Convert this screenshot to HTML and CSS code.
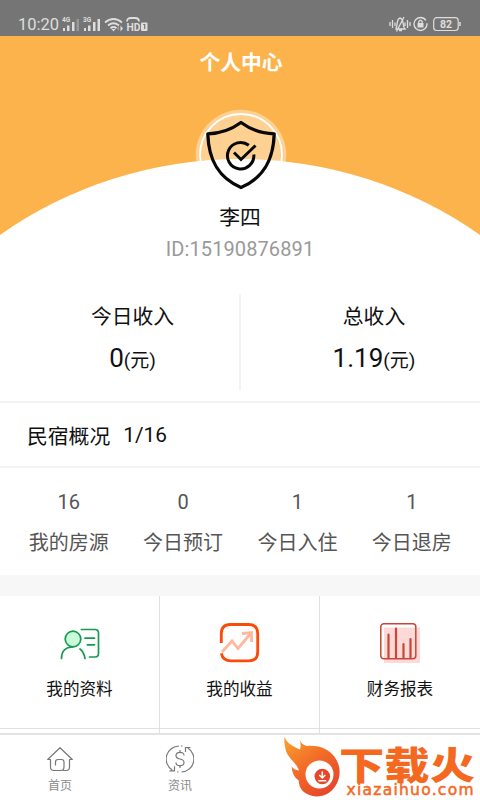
FILE: index.html
```html
<!DOCTYPE html>
<html lang="zh-CN">
<head>
<meta charset="utf-8">
<title>个人中心</title>
<link rel="stylesheet" href="styles.css">
</head>
<body>
<div class="app">
  <header class="status">
    <span class="clock">10:20</span>
    <svg class="signals" width="88" height="18" viewBox="0 0 88 18" fill="#dedede">
      <text x="0" y="6" class="net">4G</text>
      <path d="M1 12h2v3H1zM5 9.500h2.500V15H5zM10 6h2.500v9H10z"/><path d="M14.500 3H17v12h-2.500z" opacity=".35"/>
      <text x="21" y="6" class="net">3G</text>
      <path d="M22 12h2v3h-2zM26 9.500h2.500V15H26zM31 6h2.500v9H31zM35.500 3H38v12h-2.500z"/>
      <g fill="none" stroke="#dedede" stroke-width="1.800"><path d="M43 6.500q8.500-7 17 0M46 9.500q5.500-4.500 11 0M48.500 12.200q3-2.400 6 0"/></g>
      <path d="M49.500 13h4l-2 2.500z"/><path d="M58.500 9.500l2.500 3-2.500 3z"/><path d="M57 10v5l-2-2.500z" opacity=".4"/>
      <path d="M65 5.500Q65 2 69 2h4q4 0 4 3.500" fill="none" stroke="#dedede" stroke-width="1.800"/>
      <text x="64.500" y="15" class="hd" textLength="14" lengthAdjust="spacingAndGlyphs">HD</text>
      <rect x="79" y="6.500" width="6.500" height="8.500" rx="1"/><path d="M81.200 8.500h1.500v4.500" fill="none" stroke="#757575" stroke-width="1.200"/>
    </svg>
    <svg class="indicators" width="74" height="18" viewBox="0 0 74 18" fill="none" stroke="#dedede">
      <path stroke-width="1.300" d="M1 7v4M3.500 5v8M6 7.500v3.500M18.500 5v8M16 7.500v3.500M21 7v4M7 13c2-2 0-9 4-10 4.500 1 2 8 5 11H7zM7.500 16.500L15 2M10 15.500h3"/>
      <circle cx="31.500" cy="9" r="6.500" stroke-width="1.400" stroke-dasharray="36 3"/><rect x="28.500" y="8" width="6" height="4.500" fill="#dedede" stroke="none"/><path d="M29.800 8V6.500q1.700-2.500 3.400 0V8" stroke-width="1.300"/>
      <rect x="44.700" y="2.700" width="24.500" height="12.800" rx="3" stroke-width="1.200"/><path d="M71 7v4" stroke-width="1.500"/>
      <text x="57" y="13.200" class="level">82</text>
    </svg>
  </header>

  <section class="profile">
    <svg class="backdrop" width="480" height="200" viewBox="0 0 480 200"><path fill="#fdb34b" d="M0 0h480v199A417 417 0 0 0 0 199z"/></svg>
    <h1>个人中心</h1>
    <svg class="avatar" width="92" height="92" viewBox="0 0 92 92" fill="none">
      <circle cx="46" cy="46" r="45.300" fill="#fff" opacity=".4"/>
      <circle cx="46" cy="46" r="41" stroke="#fff" stroke-width="1.800"/>
      <path fill="#fff" d="M0 54.500Q46 46 92 54.500V92H0z"/>
      <path d="M46 13.500Q31 24.500 12.800 24.800C13.500 50 22.500 68.500 46 78.500C69.500 68.500 78.500 50 79.200 24.800Q61 24.500 46 13.500z" stroke="#080808" stroke-width="3.300" stroke-linejoin="round"/>
      <path d="M53.800 36.300A13.200 13.200 0 1 0 58.800 45.500M39 43.500l7 7L60.500 36.500" stroke="#080808" stroke-width="3"/>
    </svg>
    <div class="name">李四</div>
    <div class="uid">ID:15190876891</div>
  </section>

  <section class="income">
    <div class="income-item"><div>今日收入</div><div class="amount">0<small>(元)</small></div></div>
    <div class="income-item"><div>总收入</div><div class="amount">1.19<small>(元)</small></div></div>
  </section>

  <section class="overview"><span>民宿概况</span><span>1/16</span></section>

  <section class="stats">
    <div><b>16</b><span>我的房源</span></div>
    <div><b>0</b><span>今日预订</span></div>
    <div><b>1</b><span>今日入住</span></div>
    <div><b>1</b><span>今日退房</span></div>
  </section>

  <section class="menu">
    <div class="tile">
      <svg width="42" height="42" viewBox="0 0 42 42" fill="none" stroke="#159b4f" stroke-width="1.700" stroke-linecap="round">
        <circle cx="14" cy="17" r="7.800" fill="#c8fbd9"/><path d="M2.500 36.500C2.500 29 7 25 13.500 25M21 27q4 3 5 9.500M22.500 7.500H36q3.500 0 3.500 3.500v20.500q0 3.500-3.500 3.500h-5.500M26 16.200h9.500M28.300 22.800h7.200"/>
      </svg><span>我的资料</span>
    </div>
    <div class="tile">
      <svg width="42" height="42" viewBox="0 0 42 42" fill="none">
        <path d="M3 30L13 19l6 7.500L32 11M23 11.500l9.500-1V20" stroke="#ffb79d" stroke-width="2.800"/>
        <path d="M2.300 21V11.500q0-9 9-9h18.400q9 0 9 9v18.400q0 9-9 9H12q-8 0-9.700-7.500" stroke="#fa4b08" stroke-width="2.800"/>
      </svg><span>我的收益</span>
    </div>
    <div class="tile">
      <svg width="42" height="42" viewBox="0 0 42 42" fill="none" stroke="#cb4637">
        <path fill="#fdd9d8" stroke="none" d="M5 5.500h36V41H5z"/><rect x="1.800" y="1.800" width="35" height="35" rx="3" stroke-width="1.500"/><path d="M9.500 12.500V36M17 6.500V36M24.500 22V36M31.500 17V36" stroke-width="2.200" stroke-linecap="round"/>
      </svg><span>财务报表</span>
    </div>
    <i></i><i></i><i></i>
  </section>

  <nav class="tabs">
    <div class="tab">
      <svg width="28" height="28" viewBox="0 0 28 28" fill="none" stroke="#777" stroke-width="1.200" stroke-linejoin="round"><path d="M10 25.500H8q-3.500 0-3.500-3.500v-7.500H1.700L14 2.700l12.300 11.800h-2.800V22q0 3.500-3.500 3.500h-3M10 25.500h4.500q3.500 0 3.500-3.500v-5q0-2.500-2.500-2.500h-3.500Q9.500 14.500 9.500 17v3.500"/></svg>
      <span>首页</span>
    </div>
    <div class="tab">
      <svg width="28" height="28" viewBox="0 0 28 28" fill="none" stroke="#777" stroke-width="1.200"><path d="M13 1A13 13 0 0 0 6.200 25M3.500 25.800h5v-4.500M15.500 27A13 13 0 0 0 21.800 3M24.500 2.500h-5V7M15 1h1.500M11 27h1.500M18 10.500q0-3.200-4-3.200t-4 3.200q0 2.800 4 3.500t4 3.500q0 3.200-4 3.200t-4-3.200M14 5v2.300M14 20.700V23"/></svg>
      <span>资讯</span>
    </div>
  </nav>

  <svg class="brand" width="210" height="75" viewBox="0 0 210 75">
    <defs><linearGradient id="flame" x1="0" y1="0" x2=".7" y2="1"><stop offset="0" stop-color="#faa32c"/><stop offset=".5" stop-color="#f36c28"/><stop offset="1" stop-color="#e6472a"/></linearGradient></defs>
    <path fill="url(#flame)" d="M14.300 12C17 17 20 20.500 30 24.500Q31.500 20 29.500 15Q32 20 37 21C50 20 60 25 65 32.500C71 41 71 52 66 60C62 67 55 71.500 46 71.500C34 70 29 64 28.700 55.500Q22 51 21.700 41.500Q24 45 29 45.500C27 38 17 33 15.500 24Q14 18 14.300 12z"/>
    <circle cx="49.500" cy="49.500" r="14" fill="#fff"/><circle cx="52.300" cy="51.500" r="7.800" fill="#e6472a"/>
    <path d="M52.300 46.500v5.500M49.300 50l3 3 3-3M48.300 55.800h8" fill="none" stroke="#fff" stroke-width="1.500"/>
    <g fill="#f4691f"><text x="69" y="54" class="brand-name" textLength="136" lengthAdjust="spacingAndGlyphs">下载火</text>
    <text x="76.500" y="70" class="brand-url" textLength="127">xiazaihuo.com</text></g>
  </svg>
</div>
</body>
</html>
```

FILE: styles.css
```css
* { box-sizing: border-box; }
body { margin: 0; background: #fff; font-family: Roboto, "Noto Sans CJK SC", sans-serif; color: #101010; }
.app { position: relative; width: 480px; height: 800px; overflow: hidden; display: flex; flex-direction: column; background: #fff; }
.app > section, .app > header, .app > nav { flex: none; }
.status { height: 36px; background: #757575; display: flex; align-items: flex-start; padding: 15px 17px 0 18px; color: #dedede; }
.clock { font-size: 16.500px; line-height: 20px; width: 44px; white-space: nowrap; }
.signals { margin-top: 1px; }
.indicators { margin-left: auto; }
.net { font: bold 6.500px Roboto, sans-serif; }
.hd { font: bold 11.500px Roboto, sans-serif; }
.level { font: bold 10.500px Roboto, sans-serif; fill: #dedede; stroke: none; text-anchor: middle; }

.profile { position: relative; height: 246px; display: flex; flex-direction: column; align-items: center; }
.backdrop { position: absolute; top: 0; left: 0; }
.profile h1 { position: relative; margin: 12px 0 0 2px; color: #fff; font-size: 20.800px; line-height: 30px; font-weight: 700; }
.avatar { position: relative; margin: 31px 0 0 2px; }
.name { margin-top: 2px; font-size: 20.800px; line-height: 30px; }
.uid { font-size: 20px; line-height: 24px; margin-top: 4px; color: #999; letter-spacing: .1px; }

.income { height: 121px; padding-top: 12px; display: grid; grid-template-columns: 241px 239px; border-bottom: 2px solid #f3f3f3; }
.income-item { height: 96px; padding-top: 8px; text-align: center; font-size: 20.800px; line-height: 30px; padding-left: 26px; border-right: 2px solid #f3f3f3; }
.income-item + .income-item { border-right: 0; padding-left: 27px; }
.amount { font-size: 26px; line-height: 34px; margin-top: 9px; }
.amount small { font-size: 19px; }

.overview { height: 65px; display: flex; align-items: center; gap: 13px; padding: 1px 27px 0; font-size: 20.800px; border-bottom: 2px solid #f3f3f3; }
.stats { height: 107px; display: grid; grid-template-columns: repeat(4, 114.400px); padding: 20px 0 0 11.500px; color: #555; font-size: 20px; text-align: center; }
.stats b { display: block; font-weight: 400; line-height: 28px; }
.stats span { display: block; line-height: 30px; margin-top: 12px; }

.menu { height: 160px; border-top: 21px solid #f7f7f7; display: grid; grid-template-columns: repeat(3, 1fr); grid-template-rows: 133px 4px; border-bottom: 2px solid #e3e3e3; }
.tile { display: flex; flex-direction: column; align-items: center; padding-top: 26px; border-right: 1px solid #e0e0e0; border-bottom: 1px solid #e0e0e0; font-size: 16.600px; line-height: 24px; }
.tile span { margin-top: 14px; }
.menu i { border-right: 1px solid #e0e0e0; }
.tile:nth-child(3), .menu i:last-child { border-right: 0; }

.tabs { height: 65px; display: grid; grid-template-columns: repeat(4, 1fr); padding-top: 10px; color: #8a8a8a; font-size: 12px; line-height: 18px; }
.tab { display: flex; flex-direction: column; align-items: center; }
.tab span { margin-top: 4px; }
.brand { position: absolute; left: 270px; top: 725px; }
.brand-name { font: 900 38px "Noto Sans CJK SC", sans-serif; }
.brand-url { font: 15.500px "DejaVu Sans", sans-serif; stroke: #f4691f; stroke-width: .5; }
```
